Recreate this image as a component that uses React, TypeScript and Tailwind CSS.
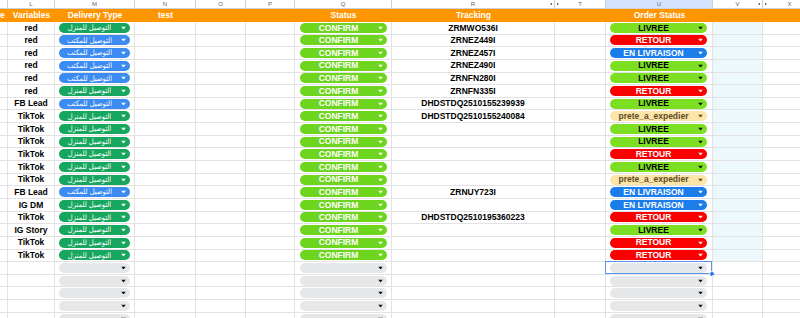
import React from "react"

type Order = "LIVREE" | "RETOUR" | "EN" | "PRETE" | null

type Row = {
    v: string
    d: "home" | "office" | null
    s: boolean
    t: string
    o: Order
}

const rows: Row[] = [
    { v: "red", d: "home", s: true, t: "ZRMWO536I", o: "LIVREE" },
    { v: "red", d: "office", s: true, t: "ZRNEZ449I", o: "RETOUR" },
    { v: "red", d: "office", s: true, t: "ZRNEZ457I", o: "EN" },
    { v: "red", d: "office", s: true, t: "ZRNEZ490I", o: "LIVREE" },
    { v: "red", d: "office", s: true, t: "ZRNFN280I", o: "LIVREE" },
    { v: "red", d: "home", s: true, t: "ZRNFN335I", o: "RETOUR" },
    { v: "FB Lead", d: "office", s: true, t: "DHDSTDQ2510155239939", o: "LIVREE" },
    { v: "TikTok", d: "home", s: true, t: "DHDSTDQ2510155240084", o: "PRETE" },
    { v: "TikTok", d: "home", s: true, t: "", o: "LIVREE" },
    { v: "TikTok", d: "home", s: true, t: "", o: "LIVREE" },
    { v: "TikTok", d: "home", s: true, t: "", o: "RETOUR" },
    { v: "TikTok", d: "home", s: true, t: "", o: "LIVREE" },
    { v: "TikTok", d: "home", s: true, t: "", o: "PRETE" },
    { v: "FB Lead", d: "office", s: true, t: "ZRNUY723I", o: "EN" },
    { v: "IG DM", d: "home", s: true, t: "", o: "EN" },
    { v: "TikTok", d: "home", s: true, t: "DHDSTDQ2510195360223", o: "RETOUR" },
    { v: "IG Story", d: "home", s: true, t: "", o: "LIVREE" },
    { v: "TikTok", d: "home", s: true, t: "", o: "RETOUR" },
    { v: "TikTok", d: "home", s: true, t: "", o: "RETOUR" },
    { v: "", d: null, s: false, t: "", o: null },
    { v: "", d: null, s: false, t: "", o: null },
    { v: "", d: null, s: false, t: "", o: null },
    { v: "", d: null, s: false, t: "", o: null },
    { v: "", d: null, s: false, t: "", o: null },
]

const cell = "h-full shrink-0 flex items-center justify-center border-r border-b border-[#e2e2e2]"

function Arrow({ color }: { color: string }) {
    return (
        <svg width="5" height="3" viewBox="0 0 5 3" className="absolute right-[4px] top-1/2 -translate-y-1/2">
            <path d="M0 0h5L2.5 3z" fill={color} />
        </svg>
    )
}

function Chip({ bg, fg, arrow, children }: { bg: string; fg: string; arrow: string; children?: React.ReactNode }) {
    return (
        <div
            className={`relative mx-[4px] flex h-[10px] w-full items-center justify-center rounded-full pr-[10px] ${bg} ${fg}`}
        >
            <span className="leading-none">{children}</span>
            <Arrow color={arrow} />
        </div>
    )
}

function OrderChip({ o }: { o: Order }) {
    if (o === "LIVREE")
        return (
            <Chip bg="bg-[#7ddf22]" fg="text-black font-bold text-[8.5px]" arrow="#000">
                LIVREE
            </Chip>
        )
    if (o === "RETOUR")
        return (
            <Chip bg="bg-[#fb0000]" fg="text-white font-bold text-[8.5px]" arrow="#fff">
                RETOUR
            </Chip>
        )
    if (o === "EN")
        return (
            <Chip bg="bg-[#1b7cec]" fg="text-white font-bold text-[8.5px]" arrow="#fff">
                EN LIVRAISON
            </Chip>
        )
    if (o === "PRETE")
        return (
            <Chip bg="bg-[#fde4a9]" fg="text-[#5c4a23] font-bold text-[8.5px]" arrow="#5c4a23">
                prete_a_expedier
            </Chip>
        )
    return <Chip bg="bg-[#e6e7e9]" fg="" arrow="#111" />
}

function DeliveryChip({ d }: { d: Row["d"] }) {
    const ar = "text-white text-[7.5px] font-['DejaVu_Sans_Condensed','DejaVu_Sans',sans-serif]"
    if (d === "home")
        return (
            <Chip bg="bg-[#17a65d]" fg={ar} arrow="#fff">
                التوصيل للمنزل
            </Chip>
        )
    if (d === "office")
        return (
            <Chip bg="bg-[#3c8bf3]" fg={ar} arrow="#fff">
                التوصيل للمكتب
            </Chip>
        )
    return <Chip bg="bg-[#e6e7e9]" fg="" arrow="#111" />
}

function LetterRow() {
    const letter = "h-full shrink-0 flex items-center justify-center border-r border-b border-[#cfd2d4] text-[6px] text-[#5f6368]"
    return (
        <div className="flex h-[9px] shrink-0 bg-white">
            <div className={`${letter} w-[8px]`} />
            <div className={`${letter} w-[47px]`}>L</div>
            <div className={`${letter} w-[80px]`}>M</div>
            <div className={`${letter} w-[61px]`}>N</div>
            <div className={`${letter} w-[50px]`}>O</div>
            <div className={`${letter} w-[49px]`}>P</div>
            <div className={`${letter} w-[97px]`}>Q</div>
            <div className={`${letter} relative w-[163px]`}>
                R
                <span className="absolute right-[2px] top-1/2 -translate-y-1/2 border-y-[1.5px] border-r-[2px] border-y-transparent border-r-[#333]" />
            </div>
            <div className={`${letter} relative w-[51px]`}>
                <span className="absolute left-[2px] top-1/2 -translate-y-1/2 border-y-[1.5px] border-l-[2px] border-y-transparent border-l-[#333]" />
                T
            </div>
            <div className={`${letter} w-[107px] bg-[#d3e3fd] text-[#0b57d0]`}>U</div>
            <div className={`${letter} relative w-[50px]`}>
                V
                <span className="absolute right-[2px] top-1/2 -translate-y-1/2 border-y-[1.5px] border-r-[2px] border-y-transparent border-r-[#333]" />
            </div>
            <div className={`${letter} relative w-[54px]`}>
                <span className="absolute left-[2px] top-1/2 -translate-y-1/2 border-y-[1.5px] border-l-[2px] border-y-transparent border-l-[#333]" />
                X
            </div>
        </div>
    )
}

function HeaderRow() {
    const h = "h-full shrink-0 flex items-center justify-center text-white font-bold text-[8.5px] leading-none"
    return (
        <div className="flex h-[13px] shrink-0 bg-[#ff9500]">
            <div className={`${h} w-[8px] justify-start overflow-hidden`}>e</div>
            <div className={`${h} w-[47px]`}>Variables</div>
            <div className={`${h} w-[80px]`}>Delivery Type</div>
            <div className={`${h} w-[61px]`}>test</div>
            <div className={`${h} w-[50px]`} />
            <div className={`${h} w-[49px]`} />
            <div className={`${h} w-[97px]`}>Status</div>
            <div className={`${h} w-[163px]`}>Tracking</div>
            <div className={`${h} w-[51px]`} />
            <div className={`${h} w-[107px]`}>Order Status</div>
            <div className={`${h} w-[50px]`} />
            <div className={`${h} w-[54px]`} />
        </div>
    )
}

function DataRow({ r, i }: { r: Row; i: number }) {
    const txt = "font-bold text-[8.5px] text-black leading-none whitespace-nowrap"
    const selected = i === 19
    return (
        <div className="flex h-[12.65px] shrink-0">
            <div className={`${cell} w-[8px]`} />
            <div className={`${cell} w-[47px] ${txt}`}>{r.v}</div>
            <div className={`${cell} w-[80px]`}>
                <DeliveryChip d={r.d} />
            </div>
            <div className={`${cell} w-[61px]`} />
            <div className={`${cell} w-[50px]`} />
            <div className={`${cell} w-[49px]`} />
            <div className={`${cell} w-[97px] pl-[1px]`}>
                {r.s ? (
                    <Chip bg="bg-[#6dd51d]" fg="text-white font-bold text-[8.5px]" arrow="#fff">
                        CONFIRM
                    </Chip>
                ) : (
                    <Chip bg="bg-[#e6e7e9]" fg="" arrow="#111" />
                )}
            </div>
            <div className={`${cell} w-[163px] ${txt}`}>{r.t}</div>
            <div className={`${cell} w-[51px]`} />
            <div className={`${cell} relative w-[107px] pr-[1px]`}>
                <OrderChip o={r.o} />
                {selected && (
                    <>
                        <div className="absolute -left-px -top-px bottom-0 right-0 border border-[#5b93ea]" />
                        <div className="absolute -bottom-[3px] -right-[3px] h-[6px] w-[6px] rounded-full border border-white bg-[#1a73e8]" />
                    </>
                )}
            </div>
            <div className={`${cell} w-[50px] ${i < 19 ? "bg-[#ecf8fb]" : ""}`} />
            <div className={`${cell} w-[54px]`} />
        </div>
    )
}

export default function App() {
    return (
        <div className="flex h-[318px] w-[800px] flex-col overflow-hidden bg-white font-['Liberation_Sans','DejaVu_Sans',sans-serif]">
            <LetterRow />
            <HeaderRow />
            {rows.map((r, i) => (
                <DataRow key={i} r={r} i={i} />
            ))}
        </div>
    )
}
